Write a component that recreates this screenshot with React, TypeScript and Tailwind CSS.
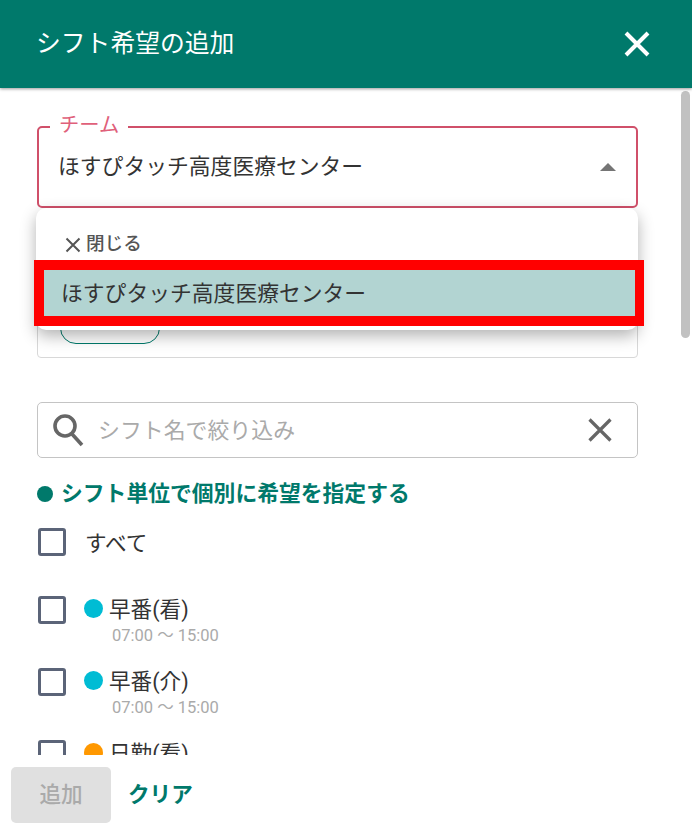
import React from "react";

const font = { fontFamily: 'Roboto, "Noto Sans CJK JP", sans-serif' };

function Shift({ color, name, time }: { color: string; name: string; time?: string }) {
  return (
    <div className="flex h-[72px] items-start">
      <div className="box-border h-[28px] w-[28px] shrink-0 rounded-[3px] border-[3px] border-[#5b6478]" />
      <div className="ml-[18px] mt-[3px] h-[19px] w-[19px] shrink-0 rounded-full" style={{ backgroundColor: color }} />
      <div className="ml-[6px] flex flex-col">
        <span className="mt-[1px] text-[21.6px] leading-[26px] text-[#333]">{name}</span>
        {time ? <span className="ml-[3px] mt-[2px] text-[16.5px] leading-[22px] text-[#aaaaaa]">{time}</span> : null}
      </div>
    </div>
  );
}

export default function App() {
  return (
    <div className="flex h-[837px] w-[692px] flex-col overflow-hidden bg-white" style={font}>
      <header className="z-10 flex h-[88px] shrink-0 items-center justify-between bg-[#00796b] pl-[36px] pr-[42px] shadow-[0_1px_3px_rgba(0,0,0,0.4)]">
        <h1 className="text-[24.8px] font-normal text-white">シフト希望の追加</h1>
        <svg width="26" height="26" viewBox="0 0 26 26" fill="none" stroke="white" strokeWidth="4">
          <path d="M2 2 L24 24 M24 2 L2 24" />
        </svg>
      </header>

      <main className="relative h-[667px] shrink-0 overflow-hidden pl-[37px] pr-[54px]">
        <div className="absolute right-[2px] top-[3px] h-[247px] w-[9px] rounded-full bg-[#c1c1c1]" />

        <div className="mt-[38px] flex h-[82px] items-center justify-between rounded-[5px] border-[2.5px] border-[#d0506a] pl-[19px] pr-[20px]">
          <span className="text-[21.8px] leading-none text-[#333]">ほすぴタッチ高度医療センター</span>
          <div className="h-0 w-0 border-x-[8px] border-b-[8px] border-x-transparent border-b-[#757575]" />
        </div>
        <span className="absolute left-[50px] top-[24px] bg-white px-[9px] text-[20.3px] leading-[26px] text-[#e0607a]">チーム</span>

        <div className="mt-[43px] h-[107px] rounded-[4px] border border-[#d8d8d8] pl-[22px] pt-[60px]">
          <div className="h-[32px] w-[100px] rounded-full border border-[#00796b]" />
        </div>

        <div className="absolute left-[36px] top-[120px] z-10 flex h-[122px] w-[602px] flex-col rounded-[10px] bg-white shadow-[0_6px_16px_rgba(0,0,0,0.3)]">
          <div className="flex h-[62px] items-center pl-[29px] pt-[11px] text-[18.6px] font-medium text-[#555]">
            <svg width="16" height="16" viewBox="0 0 16 16" fill="none" stroke="#555" strokeWidth="2" className="mr-[5px]">
              <path d="M1.5 1.5 L14.5 14.5 M14.5 1.5 L1.5 14.5" />
            </svg>
            閉じる
          </div>
        </div>

        <div className="absolute left-[34px] top-[172px] z-20 box-border flex h-[66px] w-[610px] items-center border-[10px] border-r-[9px] border-[#ff0000] bg-[#b2d4d2] pl-[17px] pt-[3px] text-[21.8px] text-[#333]">
          ほすぴタッチ高度医療センター
        </div>

        <div className="mt-[44px] flex h-[56px] items-center rounded-[5px] border-[1.5px] border-[#c4c4c4] pl-[14px] pr-[25px]">
          <svg width="32" height="34" viewBox="0 0 32 34" fill="none" stroke="#666" strokeWidth="3.6" className="shrink-0">
            <circle cx="13" cy="13" r="10" />
            <path d="M20 21 L30 32" />
          </svg>
          <span className="ml-[14px] mt-[3px] flex-1 text-[21.9px] text-[#aaaaaa]">シフト名で絞り込み</span>
          <svg width="24" height="24" viewBox="0 0 24 24" fill="none" stroke="#666" strokeWidth="3.2" className="shrink-0">
            <path d="M1.5 1.5 L22.5 22.5 M22.5 1.5 L1.5 22.5" />
          </svg>
        </div>

        <div className="mt-[21px] flex h-[30px] items-center">
          <div className="h-[16px] w-[16px] rounded-full bg-[#00796b]" />
          <span className="ml-[8px] text-[21.8px] font-bold text-[#00796b]">シフト単位で個別に希望を指定する</span>
        </div>

        <div className="ml-[1px] mt-[19px] flex h-[68px] items-start">
          <div className="box-border h-[28px] w-[28px] shrink-0 rounded-[3px] border-[3px] border-[#5b6478]" />
          <span className="ml-[19px] mt-[2px] text-[21.6px] leading-[28px] text-[#333]">すべて</span>
        </div>

        <div className="ml-[1px]">
          <Shift color="#00bcd4" name="早番(看)" time="07:00 ～ 15:00" />
          <Shift color="#00bcd4" name="早番(介)" time="07:00 ～ 15:00" />
          <Shift color="#ff9800" name="日勤(看)" />
        </div>
      </main>

      <footer className="flex h-[82px] shrink-0 items-start bg-white pl-[11px] pt-[12px]">
        <button className="h-[56px] w-[100px] rounded-[5px] bg-[#e0e0e0] text-[21.6px] font-medium text-[#aaaaaa]">追加</button>
        <span className="ml-[17px] text-[21.6px] font-bold leading-[56px] text-[#00796b]">クリア</span>
      </footer>
    </div>
  );
}
